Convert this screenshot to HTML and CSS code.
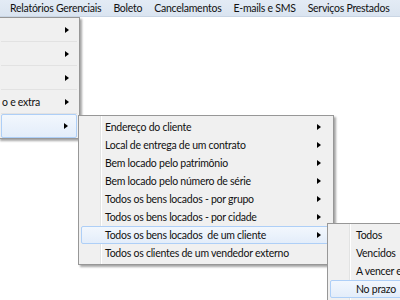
FILE: index.html
```html
<!DOCTYPE html>
<html>
<head>
<meta charset="utf-8">
<link rel="stylesheet" href="styles.css">
</head>
<body>
<div class="menubar">
  <span class="mb-item mb-first">Relatórios Gerenciais</span>
  <span class="mb-item">Boleto</span>
  <span class="mb-item">Cancelamentos</span>
  <span class="mb-item">E-mails e SMS</span>
  <span class="mb-item">Serviços Prestados</span>
  <span class="mb-item">Ações</span>
</div>

<div class="menu menu1">
  <div class="m1-row"><span class="m1-label"></span><span class="arrow"></span></div>
  <div class="m1-row"><span class="m1-label"></span><span class="arrow"></span></div>
  <div class="m1-row"><span class="m1-label"></span><span class="arrow"></span></div>
  <div class="m1-row"><span class="m1-label">o e extra</span><span class="arrow"></span></div>
  <div class="m1-row hl"><span class="m1-label"></span><span class="arrow"></span></div>
</div>

<div class="menu menu2">
  <div class="row"><span class="label">Endereço do cliente</span><span class="arrow"></span></div>
  <div class="row"><span class="label">Local de entrega de um contrato</span><span class="arrow"></span></div>
  <div class="row"><span class="label">Bem locado pelo patrimônio</span><span class="arrow"></span></div>
  <div class="row"><span class="label">Bem locado pelo número de série</span><span class="arrow"></span></div>
  <div class="row"><span class="label">Todos os bens locados - por grupo</span><span class="arrow"></span></div>
  <div class="row"><span class="label">Todos os bens locados - por cidade</span><span class="arrow"></span></div>
  <div class="row hl"><span class="label">Todos os bens locados&nbsp; de um cliente</span><span class="arrow"></span></div>
  <div class="row"><span class="label">Todos os clientes de um vendedor externo</span></div>
</div>

<div class="menu menu3">
  <div class="row"><span class="label">Todos</span></div>
  <div class="row"><span class="label">Vencidos</span></div>
  <div class="row"><span class="label">A vencer em</span></div>
  <div class="row hl"><span class="label">No prazo</span></div>
</div>
</body>
</html>
```
FILE: styles.css
```css
html, body {
  margin: 0;
  padding: 0;
  width: 400px;
  height: 300px;
  overflow: hidden;
  background: #ffffff;
  font-family: Lato, "Noto Sans", sans-serif;
  font-size: 10.5px;
  letter-spacing: -0.25px;
  color: #111;
  position: relative;
}

.menubar {
  height: 16px;
  background: linear-gradient(#e3ebf5, #dae4f0);
  border-bottom: 1px solid #c9d5e4;
  display: flex;
  align-items: center;
  white-space: nowrap;
  line-height: 16px;
  overflow: hidden;
}
.mb-item {
  padding: 0 6px;
  flex-shrink: 0;
}
.mb-first {
  margin-left: 4px;
}

.menu {
  position: absolute;
  background: #f0f0f0;
  border: 1px solid #979797;
  box-shadow: 2px 2px 2px rgba(0,0,0,0.35);
  box-sizing: border-box;
  white-space: nowrap;
}

.menu1 {
  left: -2px;
  top: 17px;
  width: 82px;
  padding: 0 2px;
}
.m1-row {
  height: 24px;
  border-bottom: 1px solid #e2e2e2;
  display: flex;
  align-items: center;
  box-sizing: border-box;
}
.m1-row .m1-label {
  flex: 1;
  padding-left: 1px;
}
.m1-row .arrow {
  margin-right: 8px;
}
.m1-row.hl {
  border: 1px solid #aecff7;
  border-radius: 2px;
  background: linear-gradient(#f2f7fd, #e3edfa);
}

.menu2 {
  left: 78px;
  top: 115px;
  width: 256px;
  padding: 2px;
  background: #f0f0f0 linear-gradient(to right, transparent 21px, #e2e3e3 21px, #e2e3e3 22px, #ffffff 22px, #ffffff 23px, transparent 23px);
}
.menu3 {
  left: 327px;
  top: 223px;
  width: 90px;
  padding: 2px;
  background: #f0f0f0 linear-gradient(to right, transparent 21px, #e2e3e3 21px, #e2e3e3 22px, #ffffff 22px, #ffffff 23px, transparent 23px);
}

.row {
  height: 18px;
  display: flex;
  align-items: center;
  box-sizing: border-box;
  border: 1px solid transparent;
  border-radius: 2px;
}
.row .label {
  flex: 1;
  padding-left: 23px;
}
.menu3 .row .label {
  padding-left: 25px;
}
.row .arrow {
  margin-right: 9px;
}
.row.hl {
  border-color: #aecff7;
  background: linear-gradient(#f2f7fd, #e3edfa);
}

.arrow {
  width: 0;
  height: 0;
  border-top: 3.5px solid transparent;
  border-bottom: 3.5px solid transparent;
  border-left: 4px solid #000;
}
```
